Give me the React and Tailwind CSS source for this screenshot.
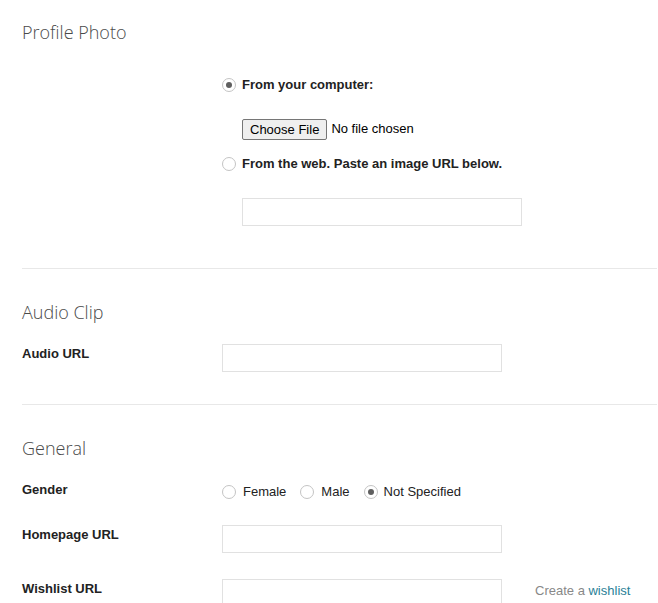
import React from "react";

function Radio({ checked }) {
  return (
    <span className="inline-flex h-[14px] w-[14px] shrink-0 items-center justify-center rounded-full border border-[#c4c4c4] bg-white">
      {checked && <span className="h-[6px] w-[6px] rounded-full bg-[#5f5f5f]" />}
    </span>
  );
}

function Heading({ children, className = "" }) {
  return (
    <h2 className={`h-[20px] text-[18px] leading-[20px] font-light text-[#4a4a4a] [font-family:'Open_Sans',sans-serif] ${className}`}>
      {children}
    </h2>
  );
}

function TextInput({ className = "" }) {
  return (
    <input
      type="text"
      className={`h-[28px] w-[280px] border border-[#e1e1e1] bg-white px-2 text-[13px] outline-none ${className}`}
    />
  );
}

function Label({ children }) {
  return (
    <div className="w-[200px] shrink-0 pt-[2px] text-[13px] leading-[16px] font-bold text-[#222]">
      {children}
    </div>
  );
}

export default function App() {
  return (
    <div className="min-h-[603px] bg-white px-[22px] pr-[1px] text-[13px] text-[#222] [font-family:'Liberation_Sans',Arial,sans-serif]">
      <Heading className="relative top-[22px]">Profile Photo</Heading>
      <div className="pt-[22px]" />

      <div className="ml-[200px] mt-[35px] flex h-[16px] items-center gap-[6px]">
        <Radio checked />
        <span className="font-bold">From your computer:</span>
      </div>

      <div className="ml-[220px] mt-[25px] flex h-[22px] items-center gap-[4px]">
        <button className="h-[21px] rounded-[2px] border border-[#767676] bg-[#efefef] px-[7px] text-[13px] leading-[19px] text-black">
          Choose File
        </button>
        <span className="text-black">No file chosen</span>
      </div>

      <div className="ml-[200px] mt-[16px] flex h-[16px] items-center gap-[6px]">
        <Radio />
        <span className="font-bold">From the web. Paste an image URL below.</span>
      </div>

      <div className="ml-[220px] mt-[26px]">
        <TextInput className="block" />
      </div>

      <div className="mt-[42px] h-px bg-[#e8e8e8]" />

      <Heading className="mt-[33px]">Audio Clip</Heading>

      <div className="mt-[22px] flex items-start">
        <Label>Audio URL</Label>
        <TextInput />
      </div>

      <div className="mt-[32px] h-px bg-[#e8e8e8]" />

      <Heading className="mt-[33px]">General</Heading>

      <div className="mt-[24px] flex items-start">
        <div className="w-[200px] shrink-0 text-[13px] leading-[16px] font-bold text-[#222]">Gender</div>
        <div className="mt-[2px] flex h-[16px] items-center text-[13px]">
          <Radio />
          <span className="ml-[7px]">Female</span>
          <span className="ml-[14px]" />
          <Radio />
          <span className="ml-[7px]">Male</span>
          <span className="ml-[14px]" />
          <Radio checked />
          <span className="ml-[6px]">Not Specified</span>
        </div>
      </div>

      <div className="mt-[25px] flex items-start">
        <Label>Homepage URL</Label>
        <TextInput />
      </div>

      <div className="mt-[26px] flex items-start">
        <Label>Wishlist URL</Label>
        <TextInput />
        <div className="ml-[33px] mt-[4px] text-[13px] leading-[16px]">
          <span className="text-[#888]">Create a </span>
          <a href="#" className="text-[#2a7f97]">wishlist</a>
        </div>
      </div>
    </div>
  );
}
